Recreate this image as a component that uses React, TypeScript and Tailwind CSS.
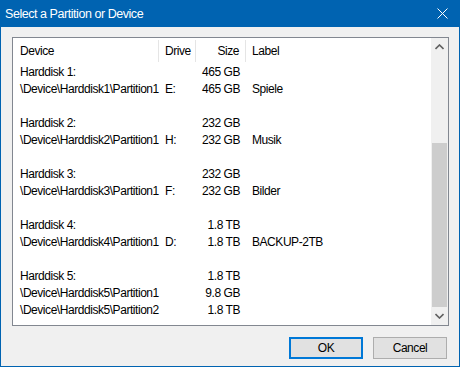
import React from "react";

type Row = { device: string; drive?: string; size: string; label?: string } | null;

const rows: Row[] = [
  { device: "Harddisk 1:", size: "465 GB" },
  { device: "\\Device\\Harddisk1\\Partition1", drive: "E:", size: "465 GB", label: "Spiele" },
  null,
  { device: "Harddisk 2:", size: "232 GB" },
  { device: "\\Device\\Harddisk2\\Partition1", drive: "H:", size: "232 GB", label: "Musik" },
  null,
  { device: "Harddisk 3:", size: "232 GB" },
  { device: "\\Device\\Harddisk3\\Partition1", drive: "F:", size: "232 GB", label: "Bilder" },
  null,
  { device: "Harddisk 4:", size: "1.8 TB" },
  { device: "\\Device\\Harddisk4\\Partition1", drive: "D:", size: "1.8 TB", label: "BACKUP-2TB" },
  null,
  { device: "Harddisk 5:", size: "1.8 TB" },
  { device: "\\Device\\Harddisk5\\Partition1", size: "9.8 GB" },
  { device: "\\Device\\Harddisk5\\Partition2", size: "1.8 TB" },
];

function Chevron({ down }: { down?: boolean }) {
  return (
    <svg width="9" height="6" viewBox="0 0 9 6" className={down ? "rotate-180" : ""}>
      <path d="M0.5 5 L4.5 1 L8.5 5" fill="none" stroke="#606060" strokeWidth="1.6" />
    </svg>
  );
}

export default function App() {
  return (
    <div
      className="flex h-[367px] w-[460px] flex-col border border-t-0 border-[#0063b1] bg-[#f0f0f0] text-[12px] tracking-[-0.45px] text-black"
      style={{ fontFamily: '"Liberation Sans", Arial, sans-serif' }}
    >
      <div className="-mx-px flex h-[27px] shrink-0 items-center justify-between bg-[#0063b1] pl-[5px] pr-[12px] text-[12.5px] text-white">
        <span className="mt-[1px]">Select a Partition or Device</span>
        <svg width="11" height="11" viewBox="0 0 11 11">
          <path d="M0.5 0.5 L10.5 10.5 M10.5 0.5 L0.5 10.5" stroke="white" strokeWidth="1" />
        </svg>
      </div>

      <div className="flex flex-1 flex-col px-[11px] pt-[10px]">
        <div className="flex h-[289px] w-[437px] border border-[#828790] bg-white">
          <div className="flex flex-1 flex-col">
            <div className="flex h-[25px] items-center">
              <div className="flex h-[22px] w-[146px] items-center border-r border-[#e5e5e5] pl-[7px]">Device</div>
              <div className="flex h-[22px] w-[37px] items-center border-r border-[#e5e5e5] pl-[6px]">Drive</div>
              <div className="flex h-[22px] w-[50px] items-center justify-end border-r border-[#e5e5e5] pr-[6px]">Size</div>
              <div className="flex h-[22px] flex-1 items-center pl-[6px]">Label</div>
            </div>
            {rows.map((r, i) =>
              r ? (
                <div key={i} className="flex h-[17px] items-center whitespace-nowrap">
                  <div className="w-[146px] pl-[7px]">{r.device}</div>
                  <div className="w-[37px] pl-[6px]">{r.drive}</div>
                  <div className="w-[50px] pr-[6px] text-right">{r.size}</div>
                  <div className="flex-1 pl-[6px]">{r.label}</div>
                </div>
              ) : (
                <div key={i} className="h-[17px]" />
              ),
            )}
          </div>
          <div className="flex w-[17px] flex-col bg-[#f0f0f0]">
            <div className="flex h-[17px] items-center justify-center">
              <Chevron />
            </div>
            <div className="h-[88px]" />
            <div className="mx-[1px] h-[164px] bg-[#cdcdcd]" />
            <div className="flex flex-1 items-center justify-center">
              <Chevron down />
            </div>
          </div>
        </div>

        <div className="mt-[11px] flex justify-end gap-[10px] pr-[1px]">
          <button className="flex h-[22px] w-[74px] items-center justify-center border-2 border-[#0078d7] bg-[#e1e1e1]">
            OK
          </button>
          <button className="flex h-[22px] w-[74px] items-center justify-center border border-[#adadad] bg-[#e1e1e1]">
            Cancel
          </button>
        </div>
      </div>
    </div>
  );
}
